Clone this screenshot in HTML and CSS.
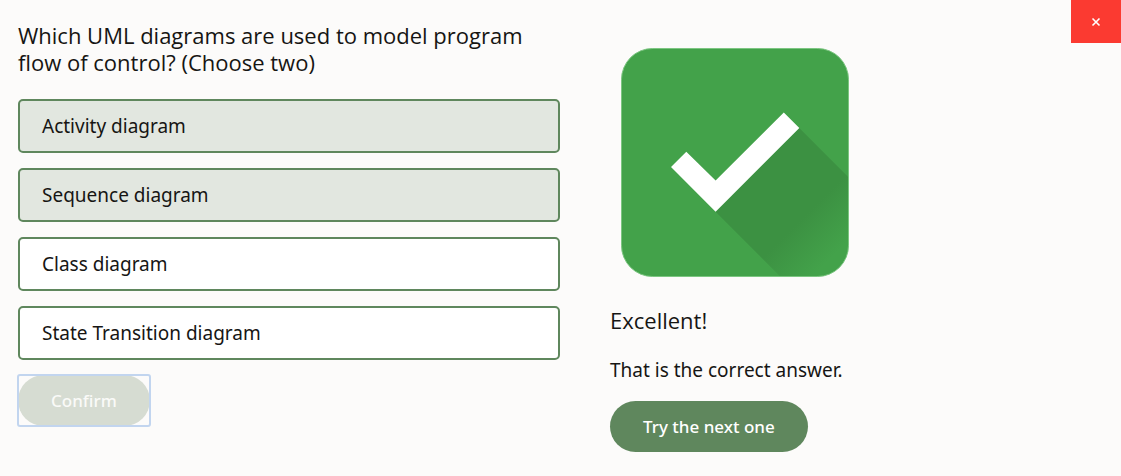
FILE: index.html
```html
<!DOCTYPE html>
<html lang="en">
<head>
<meta charset="utf-8">
<meta name="viewport" content="width=device-width, initial-scale=1">
<title>UML quiz</title>
<link rel="stylesheet" href="styles.css">
</head>
<body>
<button class="close" type="button" aria-label="Close"><svg class="close-icon" viewBox="0 0 10 10" aria-hidden="true"><path d="M1.5 1.5 8.5 8.5M8.5 1.5 1.5 8.5"/></svg></button>
<main class="quiz">
  <section class="question">
    <h1 class="title">Which UML diagrams are used to model program flow of control? (Choose two)</h1>
    <div class="options">
      <button class="option selected" type="button" aria-pressed="true">Activity diagram</button>
      <button class="option selected" type="button" aria-pressed="true">Sequence diagram</button>
      <button class="option" type="button" aria-pressed="false">Class diagram</button>
      <button class="option" type="button" aria-pressed="false">State Transition diagram</button>
    </div>
    <div class="focus-ring"><button class="pill confirm" type="button" disabled>Confirm</button></div>
  </section>
  <section class="result">
    <svg class="badge" viewBox="0 0 228 229" role="img" aria-label="Correct">
      <defs>
        <linearGradient id="fade" gradientUnits="userSpaceOnUse" x1="176" y1="176" x2="210" y2="210">
          <stop offset="0" stop-color="#3c9142"/>
          <stop offset="1" stop-color="#43a24a"/>
        </linearGradient>
        <clipPath id="tile"><rect x="1" y="1" width="226" height="227" rx="30"/></clipPath>
      </defs>
      <rect x="0.5" y="0.5" width="227" height="228" rx="31" fill="#43a24a"/>
      <path d="M178.3 80 240 141.7V240H170.8L94.6 163.8Z" fill="url(#fade)" clip-path="url(#tile)"/>
      <rect x="0.5" y="0.5" width="227" height="228" rx="31" fill="none" stroke="#7cc681"/>
      <path d="M50 119 65.3 103.7 94.6 132.6 162.8 64.4 178.3 80 94.6 163.8Z" fill="#fff"/>
    </svg>
    <h2 class="verdict">Excellent!</h2>
    <p class="message">That is the correct answer.</p>
    <button class="pill" type="button">Try the next one</button>
  </section>
</main>
</body>
</html>
```
FILE: styles.css
```css
* {
  box-sizing: border-box;
}

body {
  margin: 0;
  background: #fcfbfa;
  color: #161513;
  font-family: "Noto Sans", "Open Sans", sans-serif;
  font-size: 19px;
}

button {
  font: inherit;
  color: inherit;
  border: 0;
  cursor: pointer;
}

.quiz {
  display: grid;
  grid-template-columns: 542fr 493fr;
  column-gap: 50px;
  align-items: start;
  padding: 22px 18px;
}

.title,
.verdict {
  font-family: "Open Sans", "Noto Sans", sans-serif;
  font-size: 22px;
  font-weight: 400;
}

.title {
  margin: 0 0 23px;
  line-height: 27px;
}

.options {
  display: grid;
  gap: 15px;
  margin-bottom: 15px;
}

.option {
  padding: 12px 22px;
  border: 2px solid #5f875d;
  border-radius: 5px;
  background: #fff;
  line-height: 26px;
  text-align: left;
}

.selected {
  background: #e2e7e0;
}

.pill {
  padding: 12px 33px;
  border-radius: 26px;
  background: #5f875d;
  color: #fff;
  font-size: 17px;
  font-weight: 500;
  line-height: 27px;
}

.focus-ring {
  display: flex;
  width: fit-content;
  border-radius: 2px;
  outline: 2px solid #c2d5ef;
  outline-offset: -1px;
}

.confirm {
  background: #d6dcd2;
  color: #fafaf8;
}

.result {
  display: flex;
  flex-direction: column;
  align-items: flex-start;
  padding-top: 26px;
}

.badge {
  width: 228px;
  margin: 0 0 29px 11px;
}

.verdict {
  margin: 0 0 22px;
  line-height: 28px;
}

.message {
  margin: 0 0 17px;
  line-height: 28px;
}

.close {
  position: absolute;
  top: 0;
  right: 0;
  display: grid;
  place-items: center;
  width: 50px;
  height: 43px;
  background: #fb3a31;
}

.close-icon {
  width: 10px;
  height: 10px;
  fill: none;
  stroke: #fff;
  stroke-width: 1.6;
}
```
